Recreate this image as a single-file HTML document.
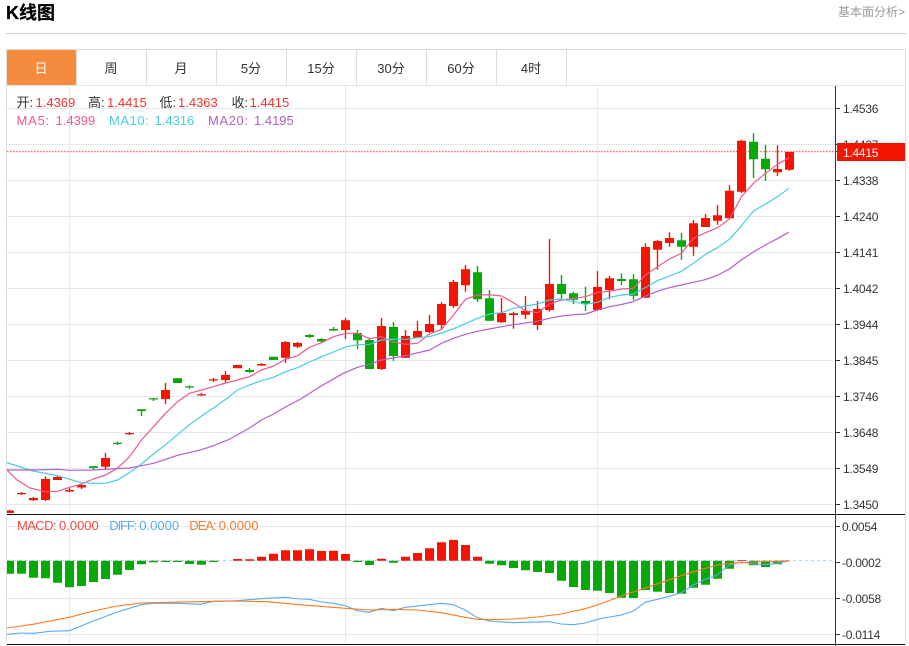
<!DOCTYPE html>
<html><head><meta charset="utf-8"><style>
html,body{margin:0;padding:0;background:#fff;width:909px;height:646px;overflow:hidden}
svg{display:block}
text{font-family:"Liberation Sans","Noto Sans CJK SC",sans-serif;font-size:13px}
.ax text{font-size:12px;fill:#333;letter-spacing:-.25px}
.tab text{fill:#333;text-anchor:middle}
</style></head><body>
<svg width="909" height="646" viewBox="0 0 909 646" xmlns="http://www.w3.org/2000/svg">
<defs><clipPath id="c"><rect x="7" y="86" width="828" height="560"/></clipPath></defs>
<text x="6" y="19" style="font-size:18px;font-weight:bold" fill="#000" stroke="#000" stroke-width=".25">K线图</text>
<text x="838" y="16" style="font-size:12px" fill="#999">基本面分析&gt;</text>
<path d="M6 33.5H906" stroke="#ccc"/>
<path d="M6.5 646V49.5H905.5V646" fill="none" stroke="#ddd"/>
<path d="M7 85.5H905" stroke="#e0e4e8"/>
<rect x="7" y="50" width="69" height="35" rx="1.5" fill="#f48b3e"/>
<path d="M76.5 50V85M146.5 50V85M216.5 50V85M286.5 50V85M356.5 50V85M426.5 50V85M496.5 50V85M566.5 50V85" stroke="#ddd"/>
<g class="tab">
<text x="41" y="73" style="fill:#fff">日</text>
<text x="111" y="73">周</text>
<text x="181" y="73">月</text>
<text x="251" y="73">5分</text>
<text x="321" y="73">15分</text>
<text x="391" y="73">30分</text>
<text x="461" y="73">60分</text>
<text x="531" y="73">4时</text>
</g>
<path d="M7 108.5H835M7 144.5H835M7 180.5H835M7 216.5H835M7 252.5H835M7 288.5H835M7 324.5H835M7 360.5H835M7 396.5H835M7 432.5H835M7 468.5H835M7 504.5H835M7 526.5H835M7 598.5H835M7 634.5H835M69.5 86V644M345.5 86V644M597.5 86V644" stroke="#e0eaf1" fill="none"/>
<path d="M7 151.6H835" stroke="#f66" stroke-width="1.4" stroke-dasharray="1.5 1.5" fill="none"/>
<path d="M7 560.6H835" stroke="#9bd8f2" stroke-dasharray="3 3" fill="none"/>
<g clip-path="url(#c)">
<path stroke="#f51400" stroke-width="1.4" fill="none" d="M9.5 510V513M21.5 492V495M33.5 497V501M45.5 476.5V501M57.5 476V480M69.5 488V492M81.5 484V489M105.5 453V470M129.5 432V435M165.5 383V404M201.5 393V396M213.5 378V382M225.5 371V382.7M237.5 365V368M261.5 363V366M285.5 341V363M297.5 342V348M345.5 318V339M381.5 318V370M405.5 330V358M417.5 321V338M429.5 315V333M441.5 302V330M453.5 280V308M465.5 265V291.7M501.5 298V323M513.5 311.7V328.7M525.5 296V319M537.5 301V330M549.5 239V311.7M597.5 271V311M609.5 276V299.3M645.5 243.3V298M657.5 240V269.7M669.5 232.3V246.7M693.5 220V255.7M705.5 214V227M717.5 205V224.7M729.5 185.3V219M741.5 139.7V193M777.5 145.3V176M789.5 152V170.7"/>
<path fill="#f51400" d="M5 510.5h9V513h-9zM17 493h9V494.3h-9zM29 498h9V500.3h-9zM41 479h9V500h-9zM53 477h9V480h-9zM65 490h9V491.5h-9zM77 485h9V487.5h-9zM101 458h9V466.7h-9zM125 433h9V434.3h-9zM161 390h9V399h-9zM197 394.3h9V395.5h-9zM209 379.3h9V380.5h-9zM221 375h9V380h-9zM233 365h9V368.3h-9zM257 364h9V365.5h-9zM281 342h9V357.7h-9zM293 343h9V346.7h-9zM341 320.3h9V330h-9zM377 326h9V369h-9zM401 336h9V357.7h-9zM413 331h9V337.7h-9zM425 324h9V332h-9zM437 304h9V325h-9zM449 282h9V306h-9zM461 269.3h9V285.3h-9zM497 313h9V322.3h-9zM509 313.3h9V315h-9zM521 310.7h9V314.7h-9zM533 309h9V325h-9zM545 284h9V310h-9zM593 287h9V310h-9zM605 278.3h9V290h-9zM641 247h9V297.7h-9zM653 241h9V249.7h-9zM665 238h9V243h-9zM689 223.3h9V246.7h-9zM701 218h9V227h-9zM713 215.3h9V220.7h-9zM725 190.7h9V218.3h-9zM737 140.7h9V191.7h-9zM773 169h9V172.3h-9zM785 152h9V169.7h-9z"/>
<path stroke="#06a906" stroke-width="1.4" fill="none" d="M93.5 466V470M117.5 441.5V445M141.5 409V416M153.5 398V401M177.5 378V383M189.5 385.5V389M249.5 368V373M273.5 356.7V360M309.5 334V338M321.5 338V342M333.5 327V331M357.5 330V349M369.5 338V369M393.5 322V361M477.5 266V302M489.5 290V321M561.5 275V300M573.5 291.7V304M585.5 286.7V311M621.5 273.3V285M633.5 274.3V300M681.5 233V259.7M753.5 133.3V178M765.5 145V181"/>
<path fill="#06a906" d="M89 466.3h9V468h-9zM113 442.7h9V444h-9zM137 409.3h9V411h-9zM149 398.3h9V399.5h-9zM173 378.3h9V383h-9zM185 386.3h9V387.5h-9zM245 370h9V372h-9zM269 356.7h9V360h-9zM305 335h9V337h-9zM317 339h9V341.5h-9zM329 329h9V330.5h-9zM353 333h9V340.3h-9zM365 340h9V369h-9zM389 327h9V356h-9zM473 272.3h9V299.3h-9zM485 298.3h9V320.7h-9zM557 284h9V294h-9zM569 293.3h9V299.7h-9zM581 301h9V303.7h-9zM617 279h9V281h-9zM629 279.3h9V295.7h-9zM677 240.3h9V246.7h-9zM749 141.7h9V159.3h-9zM761 158.7h9V169.3h-9z"/>
<polyline fill="none" stroke="#f0588f" stroke-width="1.2" stroke-linejoin="round" points="7,470 17,480 30,488 45.5,491.7 57.5,491.3 69.5,487.3 81.5,484 93.5,479 105.5,475 117.5,468.3 129.5,456.7 141.5,440 153.5,426.7 165.5,413.3 177.5,401.7 189.5,393.3 201.5,390 213.5,386.7 225.5,383 237.5,380 249.5,376.7 261.5,370 273.5,366 285.5,359.3 297.5,355.7 309.5,347.3 321.5,342.7 333.5,336.7 345.5,333.3 357.5,333.3 369.5,338.7 381.5,336.7 393.5,342 405.5,344.3 417.5,343.3 429.5,334 441.5,329.3 453.5,315 465.5,299.3 477.5,295 489.5,294.7 501.5,296 513.5,302.7 525.5,310.7 537.5,312.7 549.5,304 561.5,300 573.5,298.3 585.5,296.7 597.5,292.3 609.5,291.3 621.5,289 633.5,288.3 645.5,275 657.5,266.7 669.5,259 681.5,253.3 693.5,238.3 705.5,232.7 717.5,227.7 729.5,219 741.5,196.7 753.5,183.3 765.5,173.3 777.5,164.3 789,157.7"/>
<polyline fill="none" stroke="#46cde1" stroke-width="1.2" stroke-linejoin="round" points="7,462.7 33,471 57.5,475.7 81.5,482.7 93.5,483.3 105.5,483.3 117.5,480 129.5,472.7 141.5,464 153.5,454 165.5,444.7 177.5,434.7 189.5,424.7 201.5,416 213.5,408 225.5,399.5 237.5,390 249.5,385 261.5,380.7 273.5,377.3 285.5,371.7 297.5,367.7 309.5,362 321.5,356.7 333.5,352 345.5,347 357.5,344.7 369.5,344.3 381.5,340 393.5,339.3 405.5,339.3 417.5,337.7 429.5,336.7 441.5,333 453.5,328.7 465.5,323.7 477.5,318.3 489.5,314 501.5,312.7 513.5,308.3 525.5,306 537.5,304 549.5,300 561.5,299 573.5,301.7 585.5,304.3 597.5,302.3 609.5,297.3 621.5,295 633.5,294 645.5,287.5 657.5,280.7 669.5,276 681.5,271.3 693.5,263.3 705.5,254.3 717.5,247.7 729.5,239.3 741.5,225.7 753.5,211 765.5,204 777.5,196.7 789,188.3"/>
<polyline fill="none" stroke="#b45fc8" stroke-width="1.2" stroke-linejoin="round" points="7,470 33,470 57.5,469.3 69.5,470.3 93.5,470 129.5,468 141.5,465.7 153.5,463.3 177.5,455.3 201.5,449.7 213.5,445.7 230,439 249.5,428 261.5,420 273.5,414 285.5,407 299,400 320,386.7 343.3,373.3 357.5,367.3 369.5,364.3 381.5,360 405.5,355.7 429.5,350 441.5,343.3 453.5,338.3 465.5,334.3 477.5,331.3 489.5,329 501.5,326.7 513.5,324.7 537.5,321.3 549.5,318.3 561.5,316 573.5,314.7 585.5,314 597.5,310 609.5,306.7 621.5,304.5 633.5,301.5 645.5,296 657.3,291.3 669.3,287.7 681.3,285 693.3,282.3 705.3,279.7 717.3,275.3 729.3,269 741.3,260 753.3,252 765.3,245 777.3,238.7 788.7,232.3"/>
<path fill="#06a906" d="M5 560.7h9V573.7h-9zM17 560.7h9V573.7h-9zM29 560.7h9V577.7h-9zM41 560.7h9V578.3h-9zM53 560.7h9V582.7h-9zM65 560.7h9V587.3h-9zM77 560.7h9V586h-9zM89 560.7h9V582h-9zM101 560.7h9V579h-9zM113 560.7h9V574.7h-9zM125 560.7h9V570h-9zM137 560.7h9V564.3h-9zM149 560.7h9V562.3h-9zM161 560.7h9V562h-9zM173 560.7h9V562h-9zM185 560.7h9V564h-9zM197 560.7h9V564.7h-9zM209 560.7h9V562h-9zM353 560.7h9V562h-9zM365 560.7h9V565h-9zM389 560.7h9V562.7h-9zM485 560.7h9V563.7h-9zM497 560.7h9V565.3h-9zM509 560.7h9V568h-9zM521 560.7h9V570.3h-9zM533 560.7h9V572h-9zM545 560.7h9V573h-9zM557 560.7h9V580.7h-9zM569 560.7h9V587h-9zM581 560.7h9V590h-9zM593 560.7h9V590.7h-9zM605 560.7h9V593h-9zM617 560.7h9V597.7h-9zM629 560.7h9V598h-9zM641 560.7h9V590h-9zM653 560.7h9V591.7h-9zM665 560.7h9V593h-9zM677 560.7h9V593.7h-9zM689 560.7h9V587.7h-9zM701 560.7h9V584.7h-9zM713 560.7h9V578.7h-9zM725 560.7h9V568.7h-9zM749 560.7h9V565.3h-9zM761 560.7h9V567h-9zM773 560.7h9V564.3h-9z"/>
<path fill="#f51400" d="M233 559h9V560.7h-9zM245 559.3h9V560.7h-9zM257 556.7h9V560.7h-9zM269 553.7h9V560.7h-9zM281 550.3h9V560.7h-9zM293 550.3h9V560.7h-9zM305 549.3h9V560.7h-9zM317 551h9V560.7h-9zM329 550.7h9V560.7h-9zM341 554h9V560.7h-9zM377 558.7h9V560.7h-9zM401 556.7h9V560.7h-9zM413 553h9V560.7h-9zM425 548.3h9V560.7h-9zM437 542.3h9V560.7h-9zM449 540h9V560.7h-9zM461 545h9V560.7h-9zM473 556.7h9V560.7h-9zM737 560h9V560.7h-9z"/>
<polyline fill="none" stroke="#5aabf0" stroke-width="1.1" stroke-linejoin="round" points="7,634.3 20,633 33.3,633.3 50,631.3 69.3,630.7 81.3,626 93.3,621 117.3,612 141.3,604.7 153.3,603.3 176.7,603.3 200,604.3 213.3,601.3 237.3,600.7 261.3,598.7 285.3,597.3 300,599 309.3,599.3 321.3,602 333.3,603.3 345.3,605.7 357.3,610.7 369.3,612.3 381.3,608.3 393.3,610.7 405.3,607.3 429.3,604.7 441.3,603.3 453.3,604.7 465.3,610 477.3,617.7 489.3,621 513.3,622.7 549.3,621.7 561.3,624 573.3,624.7 585.3,623 600,618.7 621.3,615 633.3,611 645.3,602.3 657.3,599.3 669.3,596.3 681.3,592.7 693.3,585 705.3,579.3 717.3,575 729.3,565 741.3,562 753.3,564 765.3,564.7 777.3,563.3 789.3,560.7"/>
<polyline fill="none" stroke="#ff7a20" stroke-width="1.1" stroke-linejoin="round" points="7,628 33,624.3 69.3,617.3 93.3,611 117.3,606 141.3,603 166.7,602.3 200,601.7 233.3,601 266.7,601.7 300,604.7 345.3,608.3 369.3,610 393.3,609.3 417.3,610 441.3,612.7 465.3,617.3 476.7,619.3 489.3,619.7 513.3,619 537.3,617 561.3,614 585.3,608.7 600,604 621.3,596 645.3,588 669.3,579.7 693.3,571.7 717.3,565 729.3,563.3 741.3,562.7 753.3,562 777.3,561.3 789.3,560.7"/>
</g>
<path d="M7 514.5H905M7 644.5H905" stroke="#111" fill="none"/>
<path d="M835.5 86V646" stroke="#333" fill="none"/>
<path d="M835 108.5h5M835 144.5h5M835 180.5h5M835 216.5h5M835 252.5h5M835 288.5h5M835 324.5h5M835 360.5h5M835 396.5h5M835 432.5h5M835 468.5h5M835 504.5h5M835 526.5h5M835 562.5h5M835 598.5h5M835 634.5h5M835 151.5h5" stroke="#333" fill="none"/>
<g class="ax">
<text x="843" y="113">1.4536</text>
<text x="843" y="149">1.4437</text>
<text x="843" y="185">1.4338</text>
<text x="843" y="221">1.4240</text>
<text x="843" y="257">1.4141</text>
<text x="843" y="293">1.4042</text>
<text x="843" y="329">1.3944</text>
<text x="843" y="365">1.3845</text>
<text x="843" y="401">1.3746</text>
<text x="843" y="437">1.3648</text>
<text x="843" y="473">1.3549</text>
<text x="843" y="509">1.3450</text>
<text x="842" y="531">0.0054</text>
<text x="842" y="567">-0.0002</text>
<text x="842" y="603">-0.0058</text>
<text x="842" y="639">-0.0114</text>
</g>
<rect x="837" y="143" width="68" height="18" fill="#f51400"/>
<text x="843" y="157" style="font-size:12px;letter-spacing:-.25px" fill="#fff">1.4415</text>
<text x="16.5" y="107" fill="#333">开:</text><text x="35.5" y="107" fill="#f8332a">1.4369</text>
<text x="88" y="107" fill="#333">高:</text><text x="107" y="107" fill="#f8332a">1.4415</text>
<text x="159.5" y="107" fill="#333">低:</text><text x="178" y="107" fill="#f8332a">1.4363</text>
<text x="231.5" y="107" fill="#333">收:</text><text x="249.5" y="107" fill="#f8332a">1.4415</text>
<text x="16.5" y="125" fill="#f0588f" textLength="32.7">MA5:</text><text x="55.5" y="125" fill="#f0588f">1.4399</text>
<text x="109" y="125" fill="#46cde1" textLength="39.7">MA10:</text><text x="154.5" y="125" fill="#46cde1">1.4316</text>
<text x="208" y="125" fill="#b45fc8" textLength="40">MA20:</text><text x="254" y="125" fill="#b45fc8">1.4195</text>
<text x="17" y="530" fill="#f44b3f" textLength="39.5">MACD:</text><text x="59" y="530" fill="#f44b3f">0.0000</text>
<text x="109.3" y="530" fill="#5aabf0" textLength="28">DIFF:</text><text x="139.3" y="530" fill="#5aabf0">0.0000</text>
<text x="189.3" y="530" fill="#f87c30" textLength="27.3">DEA:</text><text x="218.7" y="530" fill="#f87c30">0.0000</text>
</svg>
</body></html>
